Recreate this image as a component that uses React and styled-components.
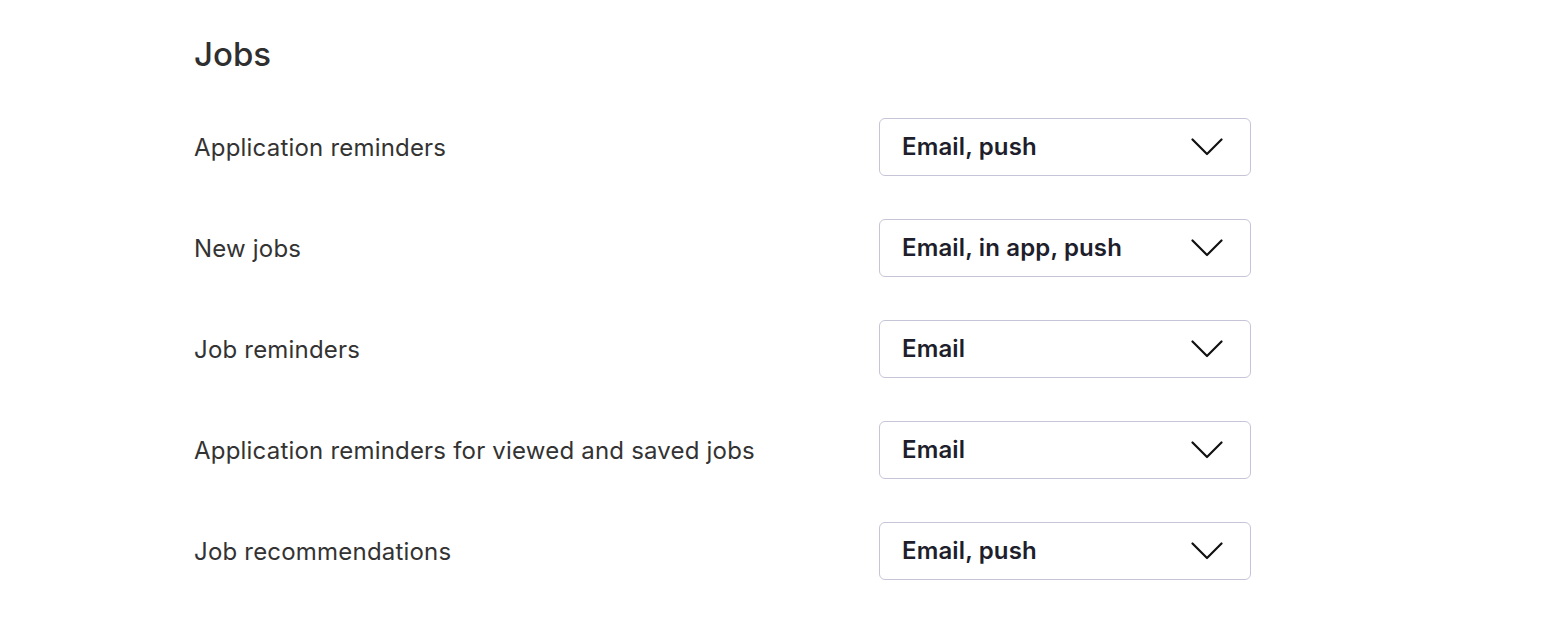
import React from 'react';
import styled, { createGlobalStyle } from 'styled-components';

const GlobalStyle = createGlobalStyle`
  body {
    margin: 0;
    background: #ffffff;
    font-family: Inter, "Noto Sans", "Liberation Sans", sans-serif;
  }
`;

const Section = styled.section`
  padding: 34px 0 40px 194px;
`;

const Title = styled.h2`
  margin: 0 0 44px;
  font-size: 33px;
  line-height: 40px;
  font-weight: 500;
  color: #2f2f2f;
`;

const List = styled.div`
  display: flex;
  flex-direction: column;
  gap: 43px;
`;

const Row = styled.div`
  display: grid;
  grid-template-columns: 685px 372px;
  align-items: center;
`;

const Label = styled.span`
  font-size: 24px;
  letter-spacing: 0.2px;
  color: #333333;
`;

const Select = styled.button`
  display: flex;
  align-items: center;
  justify-content: space-between;
  box-sizing: border-box;
  height: 58px;
  padding: 0 27px 2px 22px;
  background: #ffffff;
  border: 1px solid #c6c5d8;
  border-radius: 6px;
  font-family: inherit;
  font-size: 24px;
  font-weight: 600;
  letter-spacing: 0.15px;
  color: #1e1e2c;
  cursor: pointer;
  text-align: left;

  svg {
    margin-top: 2px;
  }
`;

const Chevron = () => (
  <svg width="32" height="18" viewBox="0 0 32 18" fill="none">
    <path d="M1.5 1.5 L16 16 L30.5 1.5" stroke="#111" strokeWidth="2.2" strokeLinecap="round" strokeLinejoin="round" />
  </svg>
);

const settings = [
  { label: 'Application reminders', value: 'Email, push' },
  { label: 'New jobs', value: 'Email, in app, push' },
  { label: 'Job reminders', value: 'Email' },
  { label: 'Application reminders for viewed and saved jobs', value: 'Email' },
  { label: 'Job recommendations', value: 'Email, push' },
];

const App = () => (
  <>
    <GlobalStyle />
    <Section>
      <Title>Jobs</Title>
      <List>
        {settings.map((s) => (
          <Row key={s.label}>
            <Label>{s.label}</Label>
            <Select type="button">
              {s.value}
              <Chevron />
            </Select>
          </Row>
        ))}
      </List>
    </Section>
  </>
);

export default App;
